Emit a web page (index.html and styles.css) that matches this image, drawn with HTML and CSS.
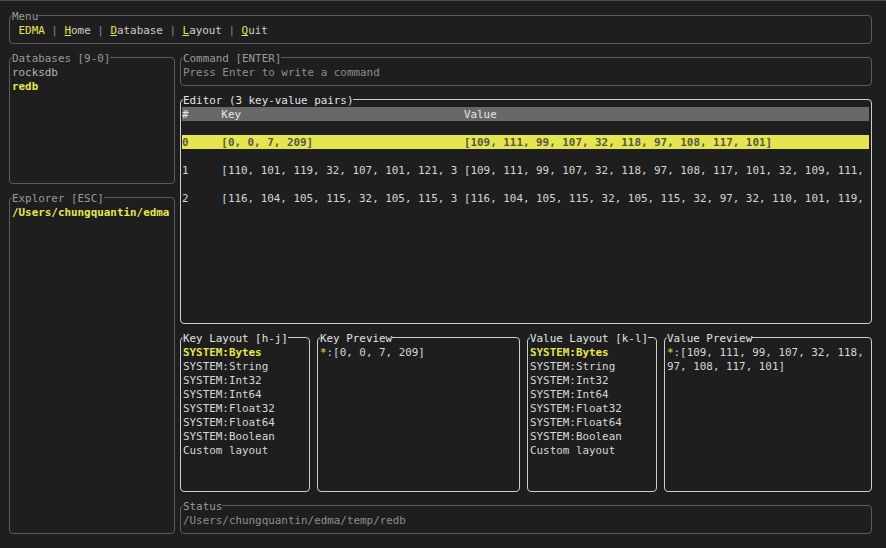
FILE: index.html
```html
<!DOCTYPE html>
<html lang="en">
<head>
<meta charset="utf-8">
<title>EDMA</title>
<link rel="stylesheet" href="styles.css">
</head>
<body>
<div class="app">
  <section class="panel dim menu">
    <div class="title">Menu</div>
    <div class="line"> <span class="y">EDMA</span> <span class="sep">|</span> <span class="hk">H</span>ome <span class="sep">|</span> <span class="hk">D</span>atabase <span class="sep">|</span> <span class="hk">L</span>ayout <span class="sep">|</span> <span class="hk">Q</span>uit</div>
  </section>
  <div class="main">
    <div class="left">
      <section class="panel dim dbs">
        <div class="title">Databases [9-0]</div>
        <div class="line">rocksdb</div>
        <div class="line y b">redb</div>
      </section>
      <section class="panel dim explorer">
        <div class="title">Explorer [ESC]</div>
        <div class="line y b">/Users/chungquantin/edma</div>
      </section>
    </div>
    <div class="right">
      <section class="panel dim command">
        <div class="title">Command [ENTER]</div>
        <div class="line muted">Press Enter to write a command</div>
      </section>
      <section class="panel bright editor">
        <div class="title">Editor (3 key-value pairs)</div>
        <div class="thead"><span>#</span><span>Key</span><span>Value</span></div>
        <div class="rows">
          <div class="trow sel"><span>0</span><span>[0, 0, 7, 209]</span><span>[109, 111, 99, 107, 32, 118, 97, 108, 117, 101]</span></div>
          <div class="trow"><span>1</span><span>[110, 101, 119, 32, 107, 101, 121, 3</span><span>[109, 111, 99, 107, 32, 118, 97, 108, 117, 101, 32, 109, 111,</span></div>
          <div class="trow"><span>2</span><span>[116, 104, 105, 115, 32, 105, 115, 3</span><span>[116, 104, 105, 115, 32, 105, 115, 32, 97, 32, 110, 101, 119,</span></div>
        </div>
      </section>
      <div class="lower">
        <section class="panel bright layout">
          <div class="title">Key Layout [h-j]</div>
          <div class="line y b">SYSTEM:Bytes</div>
          <div class="line">SYSTEM:String</div>
          <div class="line">SYSTEM:Int32</div>
          <div class="line">SYSTEM:Int64</div>
          <div class="line">SYSTEM:Float32</div>
          <div class="line">SYSTEM:Float64</div>
          <div class="line">SYSTEM:Boolean</div>
          <div class="line">Custom layout</div>
        </section>
        <section class="panel bright kpreview">
          <div class="title">Key Preview</div>
          <div class="line"><span class="y">*</span>:[0, 0, 7, 209]</div>
        </section>
        <section class="panel bright layout">
          <div class="title">Value Layout [k-l]</div>
          <div class="line y b">SYSTEM:Bytes</div>
          <div class="line">SYSTEM:String</div>
          <div class="line">SYSTEM:Int32</div>
          <div class="line">SYSTEM:Int64</div>
          <div class="line">SYSTEM:Float32</div>
          <div class="line">SYSTEM:Float64</div>
          <div class="line">SYSTEM:Boolean</div>
          <div class="line">Custom layout</div>
        </section>
        <section class="panel bright vpreview">
          <div class="title">Value Preview</div>
          <div class="line"><span class="y">*</span>:[109, 111, 99, 107, 32, 118,</div>
          <div class="line">97, 108, 117, 101]</div>
        </section>
      </div>
      <section class="panel dim status">
        <div class="title">Status</div>
        <div class="line muted">/Users/chungquantin/edma/temp/redb</div>
      </section>
    </div>
  </div>
</div>
</body>
</html>
```

FILE: styles.css
```css
html, body {
  margin: 0;
}
body {
  background: #1e1e1e;
  border-top: 1px solid #4b4b4b;
  height: 548px;
  box-sizing: border-box;
  overflow: hidden;
  font-family: "DejaVu Sans Mono", "Liberation Mono", monospace;
  font-size: 10.9px;
  line-height: 14px;
  color: #d2d2d2;
}
.app {
  padding: 14px 14px 0 9px;
}
.panel {
  border: 1px solid #5a5a5a;
  border-radius: 4px;
  padding: 0 2px 7px 2px;
  box-sizing: border-box;
  min-width: 0;
}
.panel.dim {
  border-color: #5c5c5c;
  color: #b4b4b4;
}
.panel.bright {
  border-color: #cdcdcd;
  color: #d6d6d6;
}
.title {
  margin-top: -8px;
  width: fit-content;
  background: #1e1e1e;
  white-space: pre;
  height: 14px;
}
.title, .line {
  box-sizing: border-box;
  padding-top: 2px;
  line-height: 14px;
}
.panel.dim .title {
  color: #9a9a9a;
}
.panel.bright .title {
  color: #e2e2e2;
}
.line {
  white-space: pre;
  height: 14px;
}
.muted {
  color: #8e8e8e;
}
.y {
  color: #e6e552;
}
.b {
  font-weight: bold;
}
.sep {
  color: #8a8a8a;
}
.hk {
  color: #e6e552;
  text-decoration: underline;
  text-decoration-color: #e6e552;
}
.menu .line {
  color: #cfcfcf;
}
.main {
  display: flex;
  gap: 5px;
  margin-top: 13px;
  height: 477px;
}
.left {
  width: 166px;
  display: flex;
  flex-direction: column;
  gap: 13px;
}
.dbs {
  height: 127px;
}
.explorer {
  flex: 1;
}
.explorer .line {
  overflow: hidden;
  height: 16px;
}
.right {
  flex: 1;
  min-width: 0;
  display: flex;
  flex-direction: column;
  gap: 13px;
}
.command, .status {
  height: 29px;
}
.editor {
  flex: 1;
  padding: 0 2px 7px 1px;
}
.editor .title {
  margin-left: 1px;
}
.thead, .trow {
  display: grid;
  grid-template-columns: 6ch 37ch 1fr;
  height: 14px;
  line-height: 15px;
  white-space: pre;
  overflow: hidden;
}
.thead span, .trow span {
  overflow: hidden;
}
.thead {
  background: #686868;
  color: #e6e6e6;
  margin-top: 1px;
  margin-bottom: 14px;
}
.rows {
  display: flex;
  flex-direction: column;
  gap: 14px;
}
.trow.sel {
  background: #e5e54f;
  color: #57574a;
  font-weight: bold;
}
.lower {
  display: flex;
  gap: 7px;
  height: 155px;
}
.layout {
  width: 130px;
  flex: none;
}
.kpreview {
  width: 203px;
  flex: none;
}
.vpreview {
  flex: 1;
  min-width: 0;
}
```
